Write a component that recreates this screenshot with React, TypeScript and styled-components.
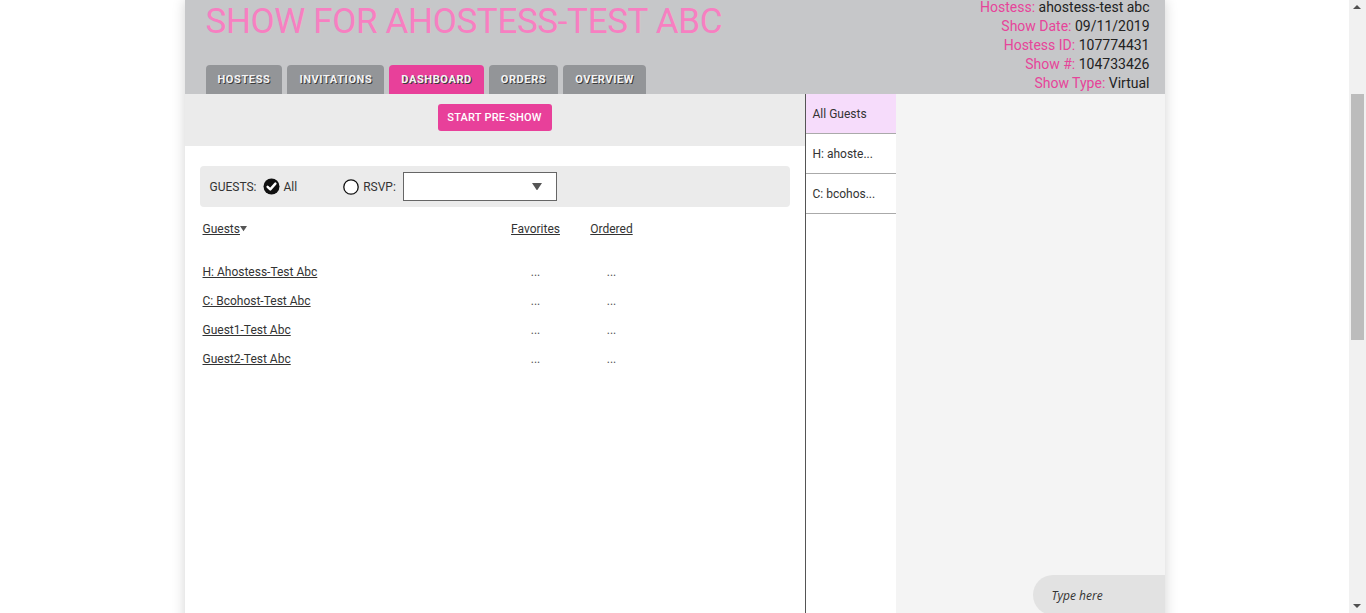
import React from 'react';
import styled, { createGlobalStyle } from 'styled-components';

const GlobalStyle = createGlobalStyle`
  html, body {
    margin: 0;
    padding: 0;
    background: #fff;
    overflow: hidden;
  }
  body {
    margin-right: 17px;
    font-family: Roboto, "Liberation Sans", sans-serif;
    color: #222;
  }
  * { box-sizing: border-box; }
`;

const Page = styled.div`
  width: 980px;
  margin: 0 auto;
  box-shadow: 0 0 12px rgba(0, 0, 0, 0.18);
`;

const Header = styled.header`
  height: 94px;
  background: #c6c7c9;
  display: flex;
  justify-content: space-between;
  padding: 0 15px 0 21px;
`;

const HeaderLeft = styled.div`
  display: flex;
  flex-direction: column;
`;

const Title = styled.h1`
  margin: 2px 0 0;
  font-size: 35px;
  line-height: 40px;
  font-weight: 400;
  color: #f77fc1;
  letter-spacing: -0.35px;
`;

const Tabs = styled.nav`
  display: flex;
  gap: 5px;
  margin-top: auto;
`;

const Tab = styled.div<{ $active?: boolean }>`
  height: 29px;
  padding: 0 12px;
  display: flex;
  align-items: center;
  border-radius: 4px 4px 0 0;
  background: ${p => (p.$active ? '#e8409a' : '#939598')};
  color: #f4f4f4;
  font-size: 11px;
  font-weight: 700;
  letter-spacing: 0.6px;
  text-shadow: 1px 1px 0 #3a3a3a;
`;

const Info = styled.div`
  margin-top: -2px;
  text-align: right;
  font-size: 14px;
  line-height: 19px;
`;

const Label = styled.span`
  color: #e6449a;
`;

const Value = styled.span`
  color: #222;
`;

const Body = styled.div`
  display: flex;
  height: 540px;
`;

const Main = styled.section`
  width: 620px;
  background: #fff;
`;

const ActionBar = styled.div`
  height: 52px;
  background: #ebebeb;
  display: flex;
  justify-content: center;
  padding-top: 10px;
`;

const PinkButton = styled.button`
  width: 114px;
  height: 27px;
  border: none;
  border-radius: 3px;
  background: #e8409a;
  color: #fff;
  font-family: inherit;
  font-size: 11px;
  font-weight: 500;
  letter-spacing: 0.2px;
  cursor: pointer;
`;

const Content = styled.div`
  padding: 20px 15px;
`;

const FilterBar = styled.div`
  height: 41px;
  background: #ebebeb;
  border-radius: 4px;
  display: flex;
  align-items: center;
  padding-left: 10px;
  font-size: 12px;
  color: #333;
`;

const FilterOption = styled.label<{ $gap?: number }>`
  display: flex;
  align-items: center;
  gap: 4px;
  margin-left: ${p => p.$gap ?? 0}px;
`;

const Select = styled.div`
  width: 154px;
  height: 29px;
  margin-left: 7px;
  background: #fff;
  border: 1px solid #666;
  display: flex;
  align-items: center;
  justify-content: flex-end;
  padding-right: 14px;
`;

const Table = styled.div`
  margin-top: 8px;
  padding-left: 3px;
  display: grid;
  grid-template-columns: 279px 50px 44px;
  column-gap: 29px;
  font-size: 12px;
`;

const HeadCell = styled.div<{ $center?: boolean }>`
  height: 28px;
  display: flex;
  align-items: center;
  justify-content: ${p => (p.$center ? 'center' : 'flex-start')};
  color: #333;
  text-decoration: underline;
  margin-bottom: 14px;
`;

const Cell = styled.div<{ $center?: boolean }>`
  height: 29px;
  display: flex;
  align-items: center;
  justify-content: ${p => (p.$center ? 'center' : 'flex-start')};
  color: #555;
`;

const GuestLink = styled.a`
  color: #333;
  text-decoration: underline;
  cursor: pointer;
`;

const Rail = styled.aside`
  width: 91px;
  background: #fff;
  border-left: 1px solid #555;
`;

const RailItem = styled.div<{ $active?: boolean }>`
  height: 40px;
  padding-left: 7px;
  display: flex;
  align-items: center;
  font-size: 12px;
  color: #333;
  background: ${p => (p.$active ? '#f6dcfb' : '#fff')};
  border-bottom: 1px solid #aaa;
`;

const Chat = styled.section`
  flex: 1;
  background: #f4f4f4;
  display: flex;
  flex-direction: column;
  justify-content: flex-end;
  padding-bottom: 19px;
`;

const ChatInput = styled.div`
  align-self: flex-end;
  width: 132px;
  height: 40px;
  border-radius: 20px 0 0 20px;
  background: #e2e2e2;
  padding-left: 19px;
  display: flex;
  align-items: center;
  font-family: "Open Sans", sans-serif;
  font-style: italic;
  font-size: 12px;
  color: #333;
`;

/* stand-in for the browser's scrollbar, which sits over the page */
const ScrollTrack = styled.div`
  position: fixed;
  top: 0;
  right: 0;
  width: 17px;
  height: 100vh;
  background: #f1f1f1;
`;

const ScrollThumb = styled.div`
  position: absolute;
  left: 2px;
  right: 2px;
  top: 94px;
  height: 246px;
  background: #bcbcbc;
`;

const ScrollArrow = styled.div<{ $down?: boolean }>`
  position: absolute;
  left: 4px;
  ${p => (p.$down ? 'bottom: 5px;' : 'top: 5px;')}
  width: 0;
  height: 0;
  border-left: 4px solid transparent;
  border-right: 4px solid transparent;
  ${p => (p.$down ? 'border-top: 4px solid #505050;' : 'border-bottom: 4px solid #505050;')}
`;

const CheckedIcon = () => (
  <svg width="17" height="17" viewBox="0 0 17 17">
    <circle cx="8.5" cy="8.5" r="8" fill="#111" />
    <path d="M4.6 8.8 L7.3 11.4 L12.4 5.6" fill="none" stroke="#fff" strokeWidth="2.4" strokeLinecap="round" strokeLinejoin="round" />
  </svg>
);

const RadioIcon = () => (
  <svg width="16" height="16" viewBox="0 0 16 16">
    <circle cx="8" cy="8" r="7.2" fill="#fff" stroke="#111" strokeWidth="1.3" />
  </svg>
);

const Caret = ({ size = 9 }: { size?: number }) => (
  <svg width={size} height={size * 0.75} viewBox="0 0 8 6">
    <path d="M0 0 H8 L4 6 Z" fill="#555" />
  </svg>
);

const tabs = ['HOSTESS', 'INVITATIONS', 'DASHBOARD', 'ORDERS', 'OVERVIEW'];
const info: [string, string][] = [
  ['Hostess:', 'ahostess-test abc'],
  ['Show Date:', '09/11/2019'],
  ['Hostess ID:', '107774431'],
  ['Show #:', '104733426'],
  ['Show Type:', 'Virtual'],
];
const guests = ['H: Ahostess-Test Abc', 'C: Bcohost-Test Abc', 'Guest1-Test Abc', 'Guest2-Test Abc'];
const railItems = ['All Guests', 'H: ahoste...', 'C: bcohos...'];

export default function App() {
  return (
    <>
      <GlobalStyle />
      <Page>
        <Header>
          <HeaderLeft>
            <Title>SHOW FOR AHOSTESS-TEST ABC</Title>
            <Tabs>
              {tabs.map(t => (
                <Tab key={t} $active={t === 'DASHBOARD'}>{t}</Tab>
              ))}
            </Tabs>
          </HeaderLeft>
          <Info>
            {info.map(([l, v]) => (
              <div key={l}>
                <Label>{l}</Label> <Value>{v}</Value>
              </div>
            ))}
          </Info>
        </Header>
        <Body>
          <Main>
            <ActionBar>
              <PinkButton>START PRE-SHOW</PinkButton>
            </ActionBar>
            <Content>
              <FilterBar>
                GUESTS:
                <FilterOption $gap={6}>
                  <CheckedIcon /> All
                </FilterOption>
                <FilterOption $gap={46}>
                  <RadioIcon /> RSVP:
                </FilterOption>
                <Select>
                  <Caret size={10} />
                </Select>
              </FilterBar>
              <Table>
                <HeadCell>
                  Guests<Caret size={7} />
                </HeadCell>
                <HeadCell $center>Favorites</HeadCell>
                <HeadCell $center>Ordered</HeadCell>
                {guests.map(g => (
                  <React.Fragment key={g}>
                    <Cell>
                      <GuestLink>{g}</GuestLink>
                    </Cell>
                    <Cell $center>...</Cell>
                    <Cell $center>...</Cell>
                  </React.Fragment>
                ))}
              </Table>
            </Content>
          </Main>
          <Rail>
            {railItems.map((r, i) => (
              <RailItem key={r} $active={i === 0}>{r}</RailItem>
            ))}
          </Rail>
          <Chat>
            <ChatInput>Type here</ChatInput>
          </Chat>
        </Body>
      </Page>
      <ScrollTrack>
        <ScrollArrow />
        <ScrollThumb />
        <ScrollArrow $down />
      </ScrollTrack>
    </>
  );
}
